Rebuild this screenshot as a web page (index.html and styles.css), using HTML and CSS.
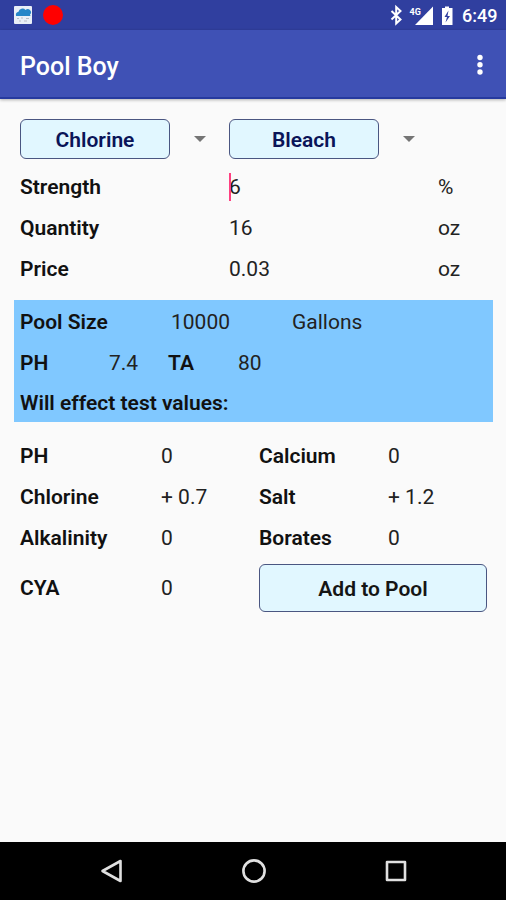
FILE: index.html
```
<!DOCTYPE html>
<html lang="en">
<head>
  <meta charset="UTF-8" />
  <meta name="viewport" content="width=device-width, initial-scale=1.0"/>
  <title>Pool Boy</title>
  <link rel="stylesheet" href="styles.css">
</head>
<body>
  <div class="status-bar">
    <svg class="weather" width="18" height="18" viewBox="0 0 18 18">
      <rect width="18" height="18" rx="1" fill="#e9eff7"/>
      <path d="M2 9.5a3 3 0 0 1 2.5-3.800A4 4 0 0 1 11.500 4a3 3 0 0 1 4.500 4.500l.5 1.500H2z" fill="#2686c8"/>
      <path d="M3 12.500h2M7 12h2M12 12.500h3M5 15h2M10 15h3" stroke="#b9bdc6"/>
    </svg>
    <span class="dot"></span>
    <svg class="signals" width="66" height="22" viewBox="0 0 66 22">
      <path d="M3.500 7l9 8.500-4.300 4V3l4.300 4-9 8.500" fill="none" stroke="#fff" stroke-width="2"/>
      <path d="M45 2.500V21H27z" fill="#fff"/>
      <text x="21.500" y="10.500" class="network">4G</text>
      <path d="M54 4h3V2.500h4V4h3.500v17H54z" fill="#fff"/>
      <path d="M60.500 6.500l-4 6.500h2.500L57.500 18.500l4.500-6.500h-2.500z" fill="#303f9f"/>
    </svg>
    <span class="clock">6:49</span>
  </div>

  <div class="app-bar">
    <h1>Pool Boy</h1>
    <svg width="6" height="22" viewBox="0 0 6 22" fill="#fff">
      <circle cx="3" cy="3.500" r="2.700"/><circle cx="3" cy="10.700" r="2.700"/><circle cx="3" cy="18" r="2.700"/>
    </svg>
  </div>

  <div class="content">
    <div class="spinners">
      <button class="btn">Chlorine</button>
      <span class="arrow"></span>
      <button class="btn">Bleach</button>
      <span class="arrow"></span>
    </div>

    <div class="fields">
      <b>Strength</b><span class="focused">6</span><span>%</span>
      <b>Quantity</b><span>16</span><span>oz</span>
      <b>Price</b><span>0.03</span><span>oz</span>
    </div>

    <div class="pool">
      <div class="size-row"><b>Pool Size</b><span>10000</span><span>Gallons</span></div>
      <div class="level-row"><b>PH</b><span>7.4</span><b>TA</b><span>80</span></div>
      <div><b>Will effect test values:</b></div>
    </div>

    <div class="results">
      <b>PH</b><span>0</span><b>Calcium</b><span>0</span>
      <b>Chlorine</b><span>+ 0.7</span><b>Salt</b><span>+ 1.2</span>
      <b>Alkalinity</b><span>0</span><b>Borates</b><span>0</span>
      <b>CYA</b><span>0</span><button class="btn add">Add to Pool</button>
    </div>
  </div>

  <div class="nav-bar">
    <svg width="24" height="26" viewBox="0 0 24 26"><path d="M20.500 3v20L2.500 13z"/></svg>
    <svg width="24" height="26" viewBox="0 0 24 26"><circle cx="12" cy="13" r="10.600"/></svg>
    <svg width="24" height="26" viewBox="0 0 24 26"><rect x="3" y="4" width="18" height="18"/></svg>
  </div>
</body>
</html>
```

FILE: styles.css
```
* { box-sizing: border-box; }
body {
  margin: 0; height: 900px;
  display: flex; flex-direction: column;
  background: #fafafa; color: #222;
  font: 21px Roboto, sans-serif;
}
b { font-weight: 600; color: #111; }

.status-bar {
  height: 30px; padding: 0 9px 0 14px;
  display: flex; align-items: center;
  background: #303f9f; color: #fff;
}
.dot {
  width: 20px; height: 20px; margin-left: 11px;
  border-radius: 50%; background: #f00;
}
.signals { margin-left: auto; }
.network {
  font: bold 9px Roboto, sans-serif;
  fill: #fff; stroke: #303f9f; stroke-width: 2px; paint-order: stroke;
}
.clock {
  width: 35px; margin-left: 8px; padding-top: 2px;
  font-size: 18px; font-weight: 500; line-height: 30px;
}

.app-bar {
  height: 69px; padding: 2px 23px 0 20px;
  display: flex; align-items: center; justify-content: space-between;
  background: #3f51b5; color: #fff;
  border-bottom: 2px solid #263a9f;
  box-shadow: 0 1px 3px rgba(0, 0, 0, .3);
}
h1 { margin: 0; padding-top: 3px; font-size: 25px; font-weight: 500; }

.content { flex: 1; padding: 20px 13px 0 14px; }
.spinners {
  display: grid; grid-template-columns: 150px 59px 150px 59px;
  padding-left: 6px; align-items: center;
}
.btn {
  height: 40px; padding: 2px 0 0;
  border: 1px solid #4a5681; border-radius: 6px;
  background: #e1f7ff; color: #0a1458;
  font: 600 21px Roboto, sans-serif;
}
.arrow {
  justify-self: center;
  border: 6px solid transparent; border-top-color: #757575; border-bottom: 0;
}

.fields {
  display: grid; grid-template-columns: 209px 209px 1fr;
  grid-auto-rows: 40.8px; align-items: center;
  padding: 8px 0 0 6px;
}
.focused { position: relative; }
.focused::before {
  content: ""; position: absolute; left: 0; top: -2px;
  width: 2px; height: 28px; background: #ff4081;
}

.pool {
  height: 122px; margin-top: 11px; padding: 1px 0 0 6px;
  display: grid; grid-template-rows: repeat(3, 40.8px); align-items: center;
  background: #80c8ff;
}
.size-row { display: grid; grid-template-columns: 151px 121px 1fr; }
.level-row { display: grid; grid-template-columns: 89px 59px 70px 1fr; }

.results {
  display: grid; grid-template-columns: 141px 98px 129px 1fr;
  grid-template-rows: repeat(3, 40.8px) 60px; align-items: center;
  padding: 13.6px 6px 0 6px;
}
.add { grid-column: span 2; height: 48px; color: #151515; }

.nav-bar {
  height: 58px; padding: 0 98px 0 100px;
  display: flex; align-items: center; justify-content: space-between;
  background: #000;
}
.nav-bar svg { fill: none; stroke: #e0e0e0; stroke-width: 2.6; stroke-linejoin: round; }
```
